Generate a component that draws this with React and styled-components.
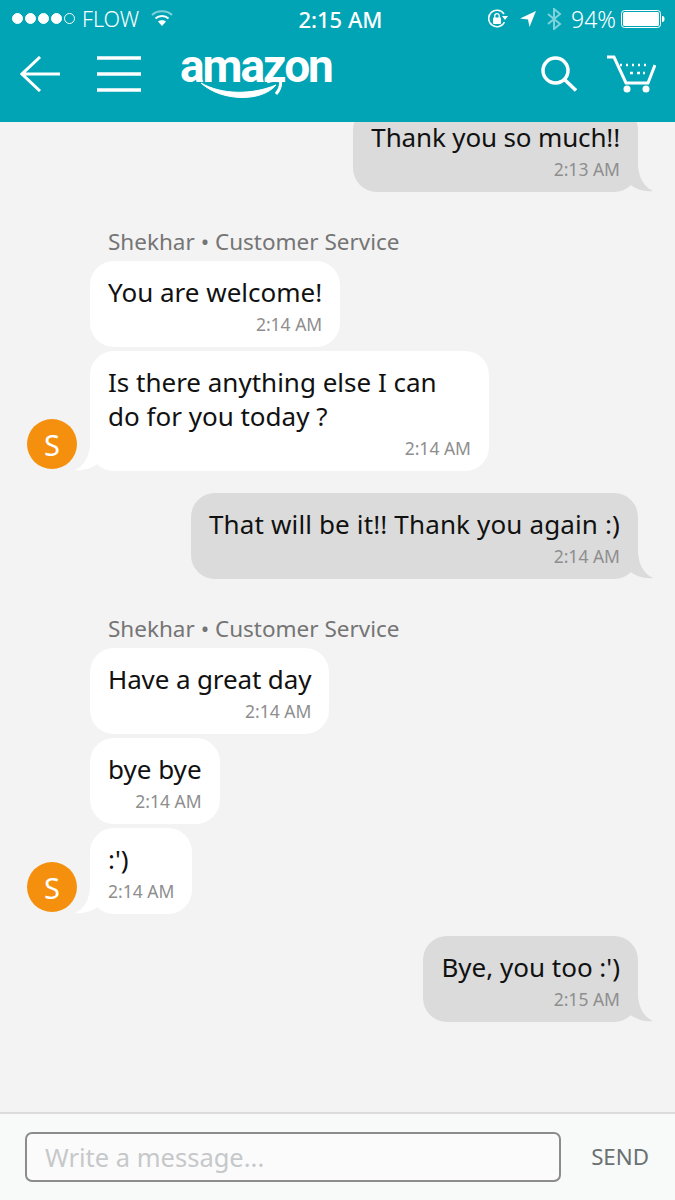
import styled, { createGlobalStyle } from 'styled-components';

const GlobalStyle = createGlobalStyle`
  * { box-sizing: border-box; }
  html, body { margin: 0; padding: 0; height: 100%; }
  body {
    background: #f3f3f3;
    font-family: "Noto Sans", "Liberation Sans", sans-serif;
  }
`;

const Screen = styled.div`
  width: 675px;
  height: 1200px;
  display: flex;
  flex-direction: column;
  overflow: hidden;
  background: #f3f3f3;
`;

const Header = styled.header`
  flex: 0 0 122px;
  background: #00a4b5;
  color: #fff;
`;

const StatusBar = styled.div`
  height: 37px;
  padding: 0 10px 0 12px;
  display: grid;
  grid-template-columns: 1fr auto 1fr;
  align-items: center;
  font-size: 21.5px;
`;

const StatusLeft = styled.div`
  display: flex;
  align-items: center;
`;

const StatusRight = styled.div`
  display: flex;
  align-items: center;
  justify-content: flex-end;
`;

const Dot = styled.span`
  width: 11px;
  height: 11px;
  margin-right: 2px;
  border-radius: 50%;
  border: 1px solid #fff;
  background: ${(p) => (p.$empty ? 'transparent' : '#fff')};
`;

const Carrier = styled.span`
  margin-left: 5px;
  margin-right: 12px;
  font-weight: 300;
`;

const Clock = styled.div`
  font-weight: 500;
  font-size: 22px;
  margin-left: 4px;
`;

const Percent = styled.span`
  margin: 0 5px 0 9px;
  font-size: 23px;
  font-weight: 300;
`;

const StatusGlyph = styled.svg`
  display: block;
  flex: none;
  margin-left: ${(p) => p.$left || 0}px;
`;

const NavBar = styled.nav`
  height: 85px;
  padding: 0 19px 12px 20px;
  display: flex;
  align-items: center;
`;

const NavIcon = styled.svg`
  display: block;
  flex: none;
  margin-left: ${(p) => p.$left || 0}px;
`;

const Logo = styled.div`
  position: relative;
  margin-left: 39px;
  width: 151px;
  height: 60px;
`;

const LogoWord = styled.div`
  font-family: "Roboto", "Liberation Sans", sans-serif;
  font-weight: 700;
  font-size: 46px;
  line-height: 44px;
  letter-spacing: -2px;
`;

const Smile = styled.svg`
  position: absolute;
  left: 20px;
  top: 35px;
`;

const Spacer = styled.div`
  flex: 1;
`;

const Conversation = styled.main`
  flex: 1;
  min-height: 0;
  overflow: hidden;
  display: flex;
  flex-direction: column;
  justify-content: flex-end;
  padding-bottom: 90px;
`;

const Row = styled.div`
  flex: none;
  display: flex;
  justify-content: ${(p) => (p.$out ? 'flex-end' : 'flex-start')};
  align-items: flex-end;
  padding: ${(p) => (p.$out ? '0 37px 0 0' : `0 0 0 ${p.$avatar ? 27 : 90}px`)};
  margin-top: ${(p) => p.$gap || 0}px;
`;

const Avatar = styled.div`
  flex: none;
  width: 50px;
  height: 50px;
  margin: 0 13px 2px 0;
  border-radius: 50%;
  background: #f5900e;
  color: #fff;
  display: flex;
  align-items: center;
  justify-content: center;
  font-size: 29px;
`;

const Bubble = styled.div`
  position: relative;
  width: ${(p) => (p.$width ? `${p.$width}px` : 'auto')};
  padding: 14px 18px 12px;
  border-radius: 24px;
  background: ${(p) => (p.$out ? '#dbdbdb' : '#fff')};
  color: #111;
  font-size: 26px;
  line-height: 34px;
  letter-spacing: ${(p) => p.$tracking || 0}px;
`;

const Time = styled.div`
  margin-top: 2px;
  margin-bottom: -1px;
  text-align: right;
  color: #8e8e8e;
  font-size: 17.5px;
  line-height: 25px;
  letter-spacing: 0;
  position: relative;
  top: 1px;
`;

const Tail = styled.svg`
  position: absolute;
  bottom: 0;
  ${(p) => (p.$out ? 'right: -15px;' : 'left: -15px;')}
`;

const Sender = styled.div`
  flex: none;
  margin-top: ${(p) => p.$gap}px;
  padding: 0 0 3px 108px;
  color: #757575;
  font-size: 22.5px;
  line-height: 32px;
`;

const Composer = styled.footer`
  flex: 0 0 88px;
  padding: 18px 26px 0 25px;
  background: #f8f9f9;
  border-top: 2px solid #dcdcdc;
  display: flex;
  align-items: flex-start;
  justify-content: space-between;
`;

const MessageInput = styled.div`
  width: 536px;
  height: 50px;
  padding-left: 18px;
  border: 2px solid #8c8c8c;
  border-radius: 7px;
  background: #fbfbfb;
  color: #c6c8ca;
  font-size: 25.5px;
  line-height: 46px;
`;

const SendButton = styled.div`
  color: #6a7172;
  font-size: 22.3px;
  line-height: 50px;
`;

function BubbleTail({ out }) {
  return (
    <Tail $out={out} width="24" height="26" viewBox="0 0 24 26">
      {out ? (
        <path d="M0 0 H9 C10 12 15 21 24 25 C16 26 8 24 0 18 Z" fill="#dbdbdb" />
      ) : (
        <path d="M24 0 H15 C14 12 9 21 0 25 C8 26 16 24 24 18 Z" fill="#fff" />
      )}
    </Tail>
  );
}

function Message({ text, time, out, tail, avatar, gap, width, tracking }) {
  return (
    <Row $out={out} $avatar={avatar} $gap={gap}>
      {avatar && <Avatar>S</Avatar>}
      <Bubble $out={out} $width={width} $tracking={tracking}>
        {text}
        <Time>{time}</Time>
        {tail && <BubbleTail out={out} />}
      </Bubble>
    </Row>
  );
}

export default function App() {
  return (
    <Screen>
      <GlobalStyle />
      <Header>
        <StatusBar>
          <StatusLeft>
            <Dot />
            <Dot />
            <Dot />
            <Dot />
            <Dot $empty />
            <Carrier>FLOW</Carrier>
            <svg width="22" height="17" viewBox="0 0 22 17">
              <path d="M1 5 C6 0 16 0 21 5" fill="none" stroke="#7fd1da" strokeWidth="2" />
              <path d="M4.500 8.500 C8 5 14 5 17.500 8.500" fill="none" stroke="#fff" strokeWidth="2" />
              <path d="M11 16 L7 11.500 C9 9.800 13 9.800 15 11.500 Z" fill="#fff" />
            </svg>
          </StatusLeft>
          <Clock>2:15 AM</Clock>
          <StatusRight>
            <StatusGlyph width="22" height="20" viewBox="0 0 22 20">
              <path d="M17.500 13 A8.300 8.300 0 1 1 17 5" fill="none" stroke="#fff" strokeWidth="1.500" />
              <path d="M15 7 L21 7 L18 11 Z" fill="#fff" />
              <rect x="6" y="8.500" width="8" height="6.500" rx="1" fill="#fff" />
              <path d="M7.800 9 V6.800 a2.200 2.200 0 0 1 4.400 0 V9" fill="none" stroke="#fff" strokeWidth="1.300" />
            </StatusGlyph>
            <StatusGlyph $left={10} width="18" height="18" viewBox="0 0 18 18">
              <path d="M17 1 L1 8.500 L9 9.500 L10.500 17 Z" fill="#fff" />
            </StatusGlyph>
            <StatusGlyph $left={9} width="16" height="22" viewBox="0 0 16 22">
              <path d="M2 6 L14 16 L8 21 V1 L14 6 L2 16" fill="none" stroke="#7fd1da" strokeWidth="2" />
            </StatusGlyph>
            <Percent>94%</Percent>
            <StatusGlyph width="44" height="18" viewBox="0 0 44 18">
              <rect x="0.500" y="0.500" width="39" height="17" rx="3" fill="none" stroke="#fff" />
              <rect x="2" y="2" width="36" height="14" rx="1.500" fill="#fff" />
              <path d="M41 6 C43 6 43.500 7 43.500 9 C43.500 11 43 12 41 12 Z" fill="#fff" />
            </StatusGlyph>
          </StatusRight>
        </StatusBar>
        <NavBar>
          <NavIcon width="40" height="36" viewBox="0 0 40 36">
            <path d="M20 1 L2 18 L20 35 M2 18 H40" fill="none" stroke="#fff" strokeWidth="3" />
          </NavIcon>
          <NavIcon $left={37} width="44" height="38" viewBox="0 0 44 38">
            <path d="M0 3 H44 M0 19 H44 M0 35 H44" fill="none" stroke="#fff" strokeWidth="3.500" />
          </NavIcon>
          <Logo>
            <LogoWord>amazon</LogoWord>
            <Smile width="84" height="22" viewBox="0 0 84 22">
              <path d="M1 4 C22 16 52 16 76 6 C62 23 22 23 1 4 Z" fill="#fff" stroke="#fff" strokeWidth="1" />
              <path d="M67 3 C71 1 77 1 80.500 2 C81 6 79.500 11 76 15" fill="none" stroke="#fff" strokeWidth="3" />
            </Smile>
          </Logo>
          <Spacer />
          <NavIcon width="36" height="36" viewBox="0 0 36 36">
            <circle cx="14.500" cy="14.500" r="12.500" fill="none" stroke="#fff" strokeWidth="3.500" />
            <path d="M23.500 23.500 L35 34.500" fill="none" stroke="#fff" strokeWidth="3.500" />
          </NavIcon>
          <NavIcon $left={29} width="50" height="38" viewBox="0 0 50 38">
            <path d="M1 2 H8 L20 28 H42 L49 10" fill="none" stroke="#fff" strokeWidth="3" />
            <circle cx="21" cy="34" r="3.500" fill="#fff" />
            <circle cx="40" cy="34" r="3.500" fill="#fff" />
            <path d="M14 10 H16 M20 10 H22 M26 10 H28 M32 10 H34 M38 10 H40 M24 18 H27 M31 18 H34 M37 18 H39" fill="none" stroke="#fff" strokeWidth="2.500" />
          </NavIcon>
        </NavBar>
      </Header>
      <Conversation>
        <Message out tail tracking={-0.15} text="Thank you so much!!" time="2:13 AM" />
        <Sender $gap={34}>Shekhar • Customer Service</Sender>
        <Message text="You are welcome!" time="2:14 AM" />
        <Message
          avatar
          tail
          gap={4}
          width={399}
          text={(
            <>
              Is there anything else I can
              <br />
              do for you today ?
            </>
          )}
          time="2:14 AM"
        />
        <Message out tail gap={22} tracking={0.14} text="That will be it!! Thank you again :)" time="2:14 AM" />
        <Sender $gap={34}>Shekhar • Customer Service</Sender>
        <Message tracking={-0.12} text="Have a great day" time="2:14 AM" />
        <Message gap={4} text="bye bye" time="2:14 AM" />
        <Message avatar tail gap={4} text=":')" time="2:14 AM" />
        <Message out tail gap={22} text="Bye, you too :')" time="2:15 AM" />
      </Conversation>
      <Composer>
        <MessageInput>Write a message...</MessageInput>
        <SendButton>SEND</SendButton>
      </Composer>
    </Screen>
  );
}
